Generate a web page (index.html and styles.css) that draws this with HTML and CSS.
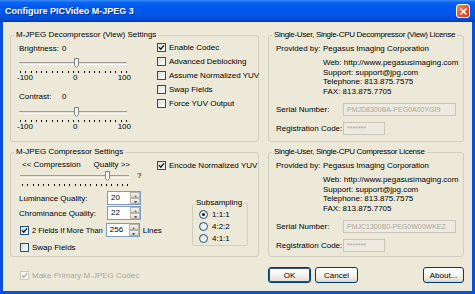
FILE: index.html
```html
<!DOCTYPE html>
<html>
<head>
    <meta charset="utf-8">
    <title>Configure PICVideo M-JPEG 3</title>
    <link rel="stylesheet" href="styles.css">
</head>
<body>
<div class="window">
    <div class="titlebar">
        <span class="title">Configure PICVideo M-JPEG 3</span>
        <span class="close">
            <svg width="9" height="9" viewBox="0 0 9 9"><path d="M1.5 1.5 L7.5 7.5 M7.5 1.5 L1.5 7.5" stroke="#fff" stroke-width="1.6"/></svg>
        </span>
    </div>
    <div class="frame">
        <div class="row">
            <!-- decompressor settings -->
            <fieldset class="group g-left g-top">
                <legend>M-JPEG Decompressor (View) Settings</legend>
                <div class="cols">
                    <div class="col-main">
                        <div class="caption"><span class="cap-name">Brightness:</span><span>0</span></div>
                        <div class="slider"><div class="track"></div><div class="thumb" style="left:55px"><svg width="5" height="10" viewBox="0 0 5 10"><path d="M0.5 0.5 H4.5 V7.5 L2.5 9.5 L0.5 7.5 Z" fill="#F5F4EE" stroke="#808080"/></svg></div></div>
                        <div class="ticks"><i></i><i></i><i></i><i></i><i></i><i></i><i></i><i></i><i></i><i></i><i></i><i></i><i></i><i></i><i></i><i></i><i></i><i></i><i></i><i></i><i></i></div>
                        <div class="scale"><span>-100</span><span>0</span><span>100</span></div>

                        <div class="caption second"><span class="cap-name">Contrast:</span><span>0</span></div>
                        <div class="slider"><div class="track"></div><div class="thumb" style="left:55px"><svg width="5" height="10" viewBox="0 0 5 10"><path d="M0.5 0.5 H4.5 V7.5 L2.5 9.5 L0.5 7.5 Z" fill="#F5F4EE" stroke="#808080"/></svg></div></div>
                        <div class="ticks"><i></i><i></i><i></i><i></i><i></i><i></i><i></i><i></i><i></i><i></i><i></i><i></i><i></i><i></i><i></i><i></i><i></i><i></i><i></i><i></i><i></i></div>
                        <div class="scale"><span>-100</span><span>0</span><span>100</span></div>
                    </div>
                    <div class="col-side">
                        <label class="check"><span class="box"><svg width="7" height="7" viewBox="0 0 7 7"><path d="M1 3.3 L2.8 5.2 L6 1.4" fill="none" stroke="#1a1a1a" stroke-width="1.4"/></svg></span>Enable Codec</label>
                        <label class="check"><span class="box"></span>Advanced Deblocking</label>
                        <label class="check"><span class="box"></span>Assume Normalized YUV</label>
                        <label class="check"><span class="box"></span>Swap Fields</label>
                        <label class="check"><span class="box"></span>Force YUV Output</label>
                    </div>
                </div>
            </fieldset>

            <!-- decompressor license -->
            <fieldset class="group g-right g-top">
                <legend>Single-User, Single-CPU Decompressor (View) License</legend>
                <div class="prov"><span class="prov-name">Provided by:</span><span>Pegasus Imaging Corporation</span></div>
                <div class="info">
                    Web: http://www.pegasusimaging.com<br>
                    Support: support@jpg.com<br>
                    Telephone: 813.875.7575<br>
                    FAX: 813.875.7705
                </div>
                <div class="field"><span class="field-name">Serial Number:</span><span class="textbox serial">PMJD8300BA-PEG0A00YGI9</span></div>
                <div class="field reg"><span class="field-name">Registration Code:</span><span class="textbox code">*******</span></div>
            </fieldset>
        </div>

        <div class="row row-two">
            <!-- compressor settings -->
            <fieldset class="group g-left g-bottom">
                <legend>M-JPEG Compressor Settings</legend>
                <div class="cols">
                    <div class="col-main">
                        <div class="qlabels"><span>&lt;&lt; Compression</span><span>Quality &gt;&gt;</span></div>
                        <div class="slider-row">
                            <div class="slider wide"><div class="track"></div><div class="thumb" style="left:85px"><svg width="5" height="10" viewBox="0 0 5 10"><path d="M0.5 0.5 H4.5 V7.5 L2.5 9.5 L0.5 7.5 Z" fill="#F5F4EE" stroke="#808080"/></svg></div></div>
                            <span class="hint">?</span>
                        </div>
                        <div class="ticks wide"><i></i><i></i><i></i><i></i><i></i><i></i><i></i><i></i><i></i><i></i><i></i><i></i><i></i><i></i><i></i><i></i><i></i><i></i><i></i><i></i><i></i></div>

                        <div class="spin-row first"><span class="spin-name">Luminance Quality:</span><span class="spin"><span class="spin-val">20</span><span class="spin-btns"><b>&#9652;</b><b>&#9662;</b></span></span></div>
                        <div class="spin-row"><span class="spin-name">Chrominance Quality:</span><span class="spin"><span class="spin-val">22</span><span class="spin-btns"><b>&#9652;</b><b>&#9662;</b></span></span></div>
                        <div class="spin-row fields">
                            <span class="box"><svg width="7" height="7" viewBox="0 0 7 7"><path d="M1 3.3 L2.8 5.2 L6 1.4" fill="none" stroke="#1a1a1a" stroke-width="1.4"/></svg></span>
                            <span class="fields-text">2 Fields If More Than</span>
                            <span class="spin"><span class="spin-val">256</span><span class="spin-btns"><b>&#9652;</b><b>&#9662;</b></span></span>
                            <span class="lines">Lines</span>
                        </div>
                        <label class="check swap"><span class="box"></span>Swap Fields</label>
                    </div>
                    <div class="col-side">
                        <label class="check encode"><span class="box"><svg width="7" height="7" viewBox="0 0 7 7"><path d="M1 3.3 L2.8 5.2 L6 1.4" fill="none" stroke="#1a1a1a" stroke-width="1.4"/></svg></span>Encode Normalized YUV</label>
                        <fieldset class="group subsampling">
                            <legend>Subsampling</legend>
                            <label class="opt"><span class="radio on"></span>1:1:1</label>
                            <label class="opt"><span class="radio"></span>4:2:2</label>
                            <label class="opt"><span class="radio"></span>4:1:1</label>
                        </fieldset>
                    </div>
                </div>
            </fieldset>

            <!-- compressor license -->
            <fieldset class="group g-right g-bottom">
                <legend>Single-User, Single-CPU Compressor License</legend>
                <div class="prov"><span class="prov-name">Provided by:</span><span>Pegasus Imaging Corporation</span></div>
                <div class="info">
                    Web: http://www.pegasusimaging.com<br>
                    Support: support@jpg.com<br>
                    Telephone: 813.875.7575<br>
                    FAX: 813.875.7705
                </div>
                <div class="field"><span class="field-name">Serial Number:</span><span class="textbox serial">PMJC1300B0-PEG0W00WKEZ</span></div>
                <div class="field reg"><span class="field-name">Registration Code:</span><span class="textbox code">*******</span></div>
            </fieldset>
        </div>

        <div class="bottom">
            <label class="check primary"><span class="box off"><svg width="7" height="7" viewBox="0 0 7 7"><path d="M1 3.3 L2.8 5.2 L6 1.4" fill="none" stroke="#ACA899" stroke-width="1.4"/></svg></span>Make Primary M-JPEG Codec</label>
            <button class="btn default">OK</button>
            <button class="btn">Cancel</button>
            <button class="btn about">About...</button>
        </div>
    </div>
</div>
</body>
</html>
```

FILE: styles.css
```css
body {
    margin: 0;
    font-family: "Liberation Sans", Arial, sans-serif;
    font-size: 8px;
    color: #000;
}

.window {
    width: 475px;
    height: 294px;
    display: flex;
    flex-direction: column;
    background: #ECE9D8;
    white-space: nowrap;
}

/* xp luna caption */
.titlebar {
    flex: none;
    height: 22px;
    box-sizing: border-box;
    display: flex;
    align-items: center;
    justify-content: space-between;
    padding: 0 5px 0 5px;
    background: linear-gradient(#3D8EF7 0, #0A66F2 10%, #0058EE 30%, #0055E6 70%, #0049D4 90%, #0038AE 100%);
}

.title {
    color: #fff;
    font-weight: bold;
    font-size: 9px;
    text-shadow: 1px 1px 0 #0B2C8E;
}

.close {
    width: 14px;
    height: 14px;
    box-sizing: border-box;
    border: 1px solid #fff;
    border-radius: 3px;
    background: linear-gradient(135deg, #F08A6A, #E0532C 60%, #C63A16);
    display: flex;
    align-items: center;
    justify-content: center;
}

.frame {
    flex: 1;
    border: 3px solid #0A50DA;
    border-top: 0;
    padding: 8px 8px 0 7px;
}

.row {
    display: flex;
    gap: 9px;
}

.row-two {
    margin-top: 5px;
}

.group {
    margin: 0;
    padding: 0;
    min-width: 0;
    box-sizing: border-box;
    border: 1px solid #D0D0BF;
    border-radius: 3px;
}

.group legend {
    margin-left: 3px;
    padding: 0 2px;
    line-height: 10px;
}

.g-left { width: 249px; }
.g-right { width: 196px; }
.g-top { height: 112px; }
.g-bottom { height: 110px; }

.g-right legend {
    letter-spacing: -0.3px;
}

.cols {
    display: flex;
    padding-left: 6px;
}

.col-main {
    width: 140px;
    flex: none;
}

.col-side {
    flex: 1;
}

/* sliders */
.caption {
    margin-top: 4px;
    height: 10px;
    line-height: 10px;
    display: flex;
    padding-left: 2px;
}

.caption.second {
    margin-top: 9px;
}

.cap-name {
    width: 43px;
}

.slider {
    position: relative;
    margin: 4px 0 0 2px;
    width: 108px;
    height: 10px;
}

.caption.second + .slider {
    margin-top: 5px;
}

.track {
    position: absolute;
    left: 0;
    right: 0;
    top: 4px;
    height: 3px;
    box-sizing: border-box;
    border-top: 1px solid #9D9C99;
    border-bottom: 1px solid #fff;
    background: #E4E2D6;
}

.thumb {
    position: absolute;
    top: 0;
    width: 5px;
    height: 10px;
}

.thumb svg {
    display: block;
}

.ticks {
    margin: 3px 0 0 3px;
    width: 107px;
    height: 2px;
    display: flex;
    justify-content: space-between;
}

.ticks i {
    width: 1px;
    height: 2px;
    background: #000;
}

.scale {
    width: 114px;
    height: 10px;
    line-height: 10px;
    display: flex;
    justify-content: space-between;
}

.qlabels {
    margin: 3px 0 0 5px;
    width: 108px;
    height: 10px;
    line-height: 10px;
    display: flex;
    justify-content: space-between;
}

.slider-row {
    display: flex;
    align-items: center;
    margin-top: 1px;
}

.slider.wide {
    margin: 0 0 0 3px;
    width: 109px;
}

.hint {
    margin-left: 8px;
    line-height: 10px;
}

.ticks.wide {
    margin-left: 5px;
    width: 106px;
}

/* checkboxes */
.check {
    display: flex;
    align-items: center;
    height: 14px;
    gap: 3px;
}

.box {
    flex: none;
    width: 9px;
    height: 9px;
    box-sizing: border-box;
    border: 1px solid #1C5180;
    background: linear-gradient(135deg, #DCDCD7, #fff);
    display: flex;
    align-items: center;
    justify-content: center;
}

.box.off {
    border-color: #CAC8BB;
    background: #fff;
}

.check.encode {
    margin-top: 1px;
}

.check.swap {
    margin: 3px 0 0 3px;
}

/* spinners */
.spin-row {
    display: flex;
    align-items: center;
    height: 14px;
    margin-top: 1px;
    padding-left: 2px;
}

.spin-row.first {
    margin-top: 5px;
}

.spin-name {
    width: 88px;
}

.spin {
    flex: none;
    width: 34px;
    height: 14px;
    box-sizing: border-box;
    border: 1px solid #7F9DB9;
    background: #fff;
    display: flex;
}

.spin-val {
    flex: 1;
    padding-left: 3px;
    line-height: 12px;
}

.spin-btns {
    width: 10px;
    display: flex;
    flex-direction: column;
}

.spin-btns b {
    flex: 1;
    font-weight: normal;
    font-size: 6px;
    line-height: 6px;
    text-align: center;
    color: #4D6185;
    background: linear-gradient(#F4F3EE, #DEDBCF);
    border: 1px solid #B8B5A6;
    box-sizing: border-box;
    overflow: hidden;
}

.spin-row.fields {
    margin-top: 3px;
    padding-left: 3px;
}

.fields-text {
    margin: 0 3px;
    font-size: 7.5px;
}

.lines {
    margin-left: 3px;
}

/* subsampling */
.subsampling {
    margin: 26px 0 0 35px;
    width: 56px;
    height: 48px;
    padding-left: 6px;
}

.subsampling legend {
    margin-left: -5px;
}

.opt {
    display: flex;
    align-items: center;
    height: 12px;
    gap: 4px;
}

.radio {
    width: 9px;
    height: 9px;
    box-sizing: border-box;
    border-radius: 50%;
    border: 1px solid #1C5180;
    background: linear-gradient(135deg, #DCDCD7, #fff);
    display: flex;
    align-items: center;
    justify-content: center;
}

.radio.on::after {
    content: "";
    width: 3px;
    height: 3px;
    border-radius: 50%;
    background: #1a1a1a;
}

/* license boxes */
.prov {
    display: flex;
    margin-top: 4px;
    padding-left: 7px;
    line-height: 10px;
}

.prov-name {
    width: 47px;
}

.info {
    margin-top: 4px;
    padding-left: 54px;
    line-height: 9.5px;
}

.field {
    display: flex;
    align-items: center;
    margin-top: 7px;
    padding-left: 7px;
}

.field.reg {
    margin-top: 6px;
}

.field-name {
    width: 67px;
}

.textbox {
    height: 13px;
    box-sizing: border-box;
    border: 1px solid #C9C7BA;
    background: #EDEBDF;
    color: #ACA899;
    padding-left: 3px;
    line-height: 11px;
    overflow: hidden;
}

.textbox.serial {
    width: 113px;
    font-size: 7px;
}

.textbox.code {
    width: 42px;
    font-size: 7px;
}

/* bottom buttons */
.bottom {
    display: flex;
    align-items: center;
    margin-top: 10px;
    height: 16px;
}

.check.primary {
    width: 248px;
    padding-left: 10px;
    color: #ACA899;
}

.btn {
    height: 16px;
    width: 43px;
    padding: 0;
    box-sizing: border-box;
    border: 1px solid #003C74;
    border-radius: 3px;
    background: linear-gradient(#FFFFFF, #F4F3EE 50%, #E6E3DA 85%, #D6D0C5);
    font: inherit;
    color: #000;
}

.btn + .btn {
    margin-left: 4px;
}

.btn.default {
    box-shadow: inset 0 0 0 1px #3A4E7C;
}

.btn.about {
    margin-left: auto;
    width: 41px;
}
```
